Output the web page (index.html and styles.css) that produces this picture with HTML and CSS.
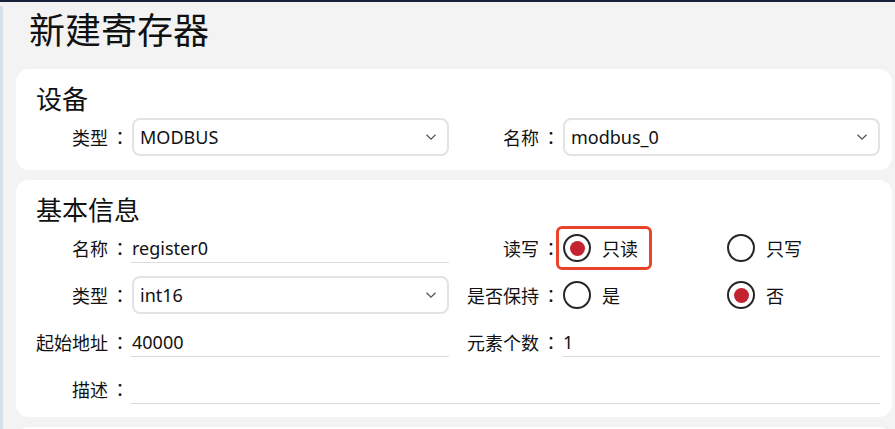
FILE: index.html
```html
<!DOCTYPE html>
<html lang="zh-CN">
<head>
<meta charset="utf-8">
<title>新建寄存器</title>
<link rel="stylesheet" href="styles.css">
</head>
<body>
<div class="app">
  <h1 class="title">新建寄存器</h1>

  <section class="card card-device">
    <h2 class="card-title">设备</h2>
    <div class="form-grid">
      <label class="lbl">类型<span class="colon">：</span></label>
      <div class="select"><span class="select-value">MODBUS</span>
        <svg class="chev" width="12" height="8" viewBox="0 0 12 8"><path d="M1.5 1.8 L6 6.2 L10.5 1.8" fill="none" stroke="#555" stroke-width="1.3"/></svg>
      </div>
      <label class="lbl">名称<span class="colon">：</span></label>
      <div class="select"><span class="select-value">modbus_0</span>
        <svg class="chev" width="12" height="8" viewBox="0 0 12 8"><path d="M1.5 1.8 L6 6.2 L10.5 1.8" fill="none" stroke="#555" stroke-width="1.3"/></svg>
      </div>
    </div>
  </section>

  <section class="card card-basic">
    <h2 class="card-title">基本信息</h2>
    <div class="form-grid">
      <label class="lbl">名称<span class="colon">：</span></label>
      <div class="input"><span>register0</span></div>
      <label class="lbl">读写<span class="colon">：</span></label>
      <div class="radios">
        <div class="opt"><span class="opt-inner highlight"><span class="radio checked"></span><span class="opt-text">只读</span></span></div>
        <div class="opt"><span class="opt-inner"><span class="radio"></span><span class="opt-text">只写</span></span></div>
      </div>

      <label class="lbl">类型<span class="colon">：</span></label>
      <div class="select"><span class="select-value">int16</span>
        <svg class="chev" width="12" height="8" viewBox="0 0 12 8"><path d="M1.5 1.8 L6 6.2 L10.5 1.8" fill="none" stroke="#555" stroke-width="1.3"/></svg>
      </div>
      <label class="lbl">是否保持<span class="colon">：</span></label>
      <div class="radios">
        <div class="opt"><span class="opt-inner"><span class="radio"></span><span class="opt-text">是</span></span></div>
        <div class="opt"><span class="opt-inner"><span class="radio checked"></span><span class="opt-text">否</span></span></div>
      </div>

      <label class="lbl">起始地址<span class="colon">：</span></label>
      <div class="input"><span>40000</span></div>
      <label class="lbl">元素个数<span class="colon">：</span></label>
      <div class="input"><span>1</span></div>

      <label class="lbl">描述<span class="colon">：</span></label>
      <div class="input input-wide"><span></span></div>
    </div>
  </section>

  <section class="card card-next"></section>
</div>
</body>
</html>
```

FILE: styles.css
```css
* { box-sizing: border-box; }

html, body {
  margin: 0;
  padding: 0;
  height: 100%;
  overflow: hidden;
}

body {
  background: #f3f3f3;
  font-family: "Noto Sans", "Noto Sans CJK SC", sans-serif;
  color: #111;
  border-top: 2px solid #17223a;
}

.app {
  min-height: 100%;
  border-left: 3px solid #d6deea;
  padding: 0 3px 0 13px;
}

.title {
  margin: 4px 0 19px 13px;
  font-family: "Noto Sans CJK SC", sans-serif;
  font-size: 36px;
  font-weight: 400;
  line-height: 44px;
  color: #111;
}

.card {
  background: #fff;
  border-radius: 13px;
  padding: 14px 12px 14px 20px;
  margin-bottom: 10px;
}

.card-basic { padding-bottom: 9px; }

.card-next { height: 40px; }

.card-title {
  margin: 0 0 5px 0;
  font-family: "Noto Sans CJK SC", sans-serif;
  font-size: 26px;
  font-weight: 400;
  line-height: 30px;
  color: #111;
}

.form-grid {
  display: grid;
  grid-template-columns: 92px minmax(0, 1fr) 106px minmax(0, 1fr);
  grid-auto-rows: 38px;
  column-gap: 4px;
  row-gap: 9px;
  font-size: 18px;
}

.lbl {
  display: flex;
  align-items: center;
  justify-content: flex-end;
  font-family: "Noto Sans CJK SC", sans-serif;
  font-size: 18px;
  color: #111;
  white-space: nowrap;
}

.colon {
  font-family: "Noto Sans CJK JP", "Noto Sans CJK SC", sans-serif;
  margin-left: 3px;
  margin-right: -1px;
}

.select {
  display: flex;
  align-items: center;
  justify-content: space-between;
  height: 38px;
  border: 2px solid #e3e3e3;
  border-radius: 8px;
  padding: 0 10px 0 6px;
  background: #fff;
}

.select-value {
  font-size: 18px;
  color: #111;
  line-height: 1;
}

.chev { display: block; }

.input {
  align-self: center;
  height: 30px;
  border-bottom: 1px solid #dcdcdc;
  display: flex;
  align-items: center;
  padding-left: 1px;
  margin-left: -1px;
  font-size: 18px;
  color: #111;
}

.input-wide { grid-column: 2 / 5; }

.radios {
  display: flex;
  align-items: center;
}

.opt {
  flex: 0 0 164px;
  display: flex;
  align-items: center;
}

.opt-inner {
  position: relative;
  display: inline-flex;
  align-items: center;
  gap: 11px;
}

.opt-text {
  font-family: "Noto Sans CJK SC", sans-serif;
  font-size: 18px;
  color: #111;
}

.radio {
  width: 28px;
  height: 28px;
  border-radius: 50%;
  border: 2.5px solid #262626;
  display: flex;
  align-items: center;
  justify-content: center;
  background: #fff;
}

.radio.checked::before {
  content: "";
  width: 15px;
  height: 15px;
  border-radius: 50%;
  background: #c3232f;
}

.highlight::after {
  content: "";
  position: absolute;
  left: -7px;
  right: -14px;
  top: -8px;
  bottom: -8px;
  border: 3px solid #e9442b;
  border-radius: 6px;
  pointer-events: none;
}
```
